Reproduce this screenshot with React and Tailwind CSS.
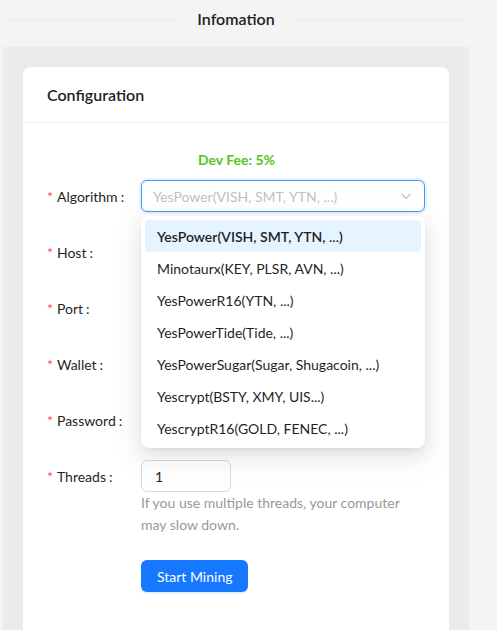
import React from "react";

const FONT = { fontFamily: 'Lato, "Noto Sans", "Liberation Sans", sans-serif' };

const options = [
  "YesPower(VISH, SMT, YTN, ...)",
  "Minotaurx(KEY, PLSR, AVN, ...)",
  "YesPowerR16(YTN, ...)",
  "YesPowerTide(Tide, ...)",
  "YesPowerSugar(Sugar, Shugacoin, ...)",
  "Yescrypt(BSTY, XMY, UIS...)",
  "YescryptR16(GOLD, FENEC, ...)",
];

function Label({ text }) {
  return (
    <div className="w-[94px] shrink-0 flex items-center h-8 text-[14px] text-[#1f1f1f]">
      <span className="text-[#ff4d4f] mr-1 text-[14px]">*</span>
      <span>{text}</span>
      <span className="ml-[3px]">:</span>
    </div>
  );
}

function Row({ label, children, last }) {
  return (
    <div className={`flex ${last ? "" : "mb-6"}`}>
      <Label text={label} />
      <div className="flex-1">{children}</div>
    </div>
  );
}

function TextInput() {
  return <div className="h-8 w-[284px] rounded-md border border-[#d9d9d9] bg-white" />;
}

export default function App() {
  return (
    <div className="min-h-[630px] bg-[#f4f4f4] pl-[3px] text-[14px]" style={FONT}>
      <div className="w-[466px]">
        <div className="flex items-center h-[38px]">
          <div className="flex-1 h-px bg-[#ebebeb]" />
          <div className="px-[18px] text-[16px] font-semibold text-[#1f1f1f] leading-6">Infomation</div>
          <div className="flex-1 h-px bg-[#ebebeb]" />
        </div>
        <div className="mt-[9px] bg-[#ebebeb] px-5 pt-5 min-h-[583px]">
          <div className="bg-white rounded-lg min-h-[570px]">
            <div className="h-[56px] px-6 flex items-center border-b border-[#f0f0f0] text-[16px] font-semibold text-[#1f1f1f]">
              Configuration
            </div>
            <div className="px-6 pt-[25px] pb-6">
              <div className="text-center text-[#52c41a] font-bold text-[14px] leading-6 mb-[8px] pl-[1px]">
                Dev Fee: 5%
              </div>
              <div className="relative">
                <Row label="Algorithm">
                  <div className="h-8 w-[284px] rounded-md border border-[#4096ff] shadow-[0_0_0_2px_rgba(5,145,255,0.1)] bg-white flex items-center px-[11px] justify-between">
                    <span className="text-[#bfbfbf]">YesPower(VISH, SMT, YTN, ...)</span>
                    <svg width="12" height="12" viewBox="0 0 12 12" fill="none" className="mr-[1px]">
                      <path d="M1.5 4 L6 8.5 L10.5 4" stroke="#bfbfbf" strokeWidth="1.2" />
                    </svg>
                  </div>
                </Row>
                <Row label="Host"><TextInput /></Row>
                <Row label="Port"><TextInput /></Row>
                <Row label="Wallet"><TextInput /></Row>
                <Row label="Password"><TextInput /></Row>
                <Row label="Threads" last>
                  <div className="h-8 w-[90px] rounded-md border border-[#d9d9d9] bg-white flex items-center px-[13px] text-[#1f1f1f]">
                    1
                  </div>
                  <div className="text-[#999999] leading-[22px] w-[270px]">
                    If you use multiple threads, your computer may slow down.
                  </div>
                </Row>
                <div className="absolute left-[94px] top-[36px] w-[284px] bg-white rounded-lg p-1 shadow-[0_6px_16px_0_rgba(0,0,0,0.08),0_3px_6px_-4px_rgba(0,0,0,0.12),0_9px_28px_8px_rgba(0,0,0,0.05)]">
                  {options.map((o, i) => (
                    <div
                      key={o}
                      className={`h-8 flex items-center px-3 rounded ${i === 0 ? "bg-[#e6f4ff] font-semibold text-[#1f1f1f]" : "text-[#1f1f1f]"}`}
                    >
                      {o}
                    </div>
                  ))}
                </div>
              </div>
              <div className="pl-[94px] mt-[24px]">
                <button className="h-8 px-4 rounded-md bg-[#1677ff] text-white text-[14px] shadow-[0_2px_0_rgba(5,145,255,0.1)]">
                  Start Mining
                </button>
              </div>
            </div>
          </div>
        </div>
      </div>
    </div>
  );
}
